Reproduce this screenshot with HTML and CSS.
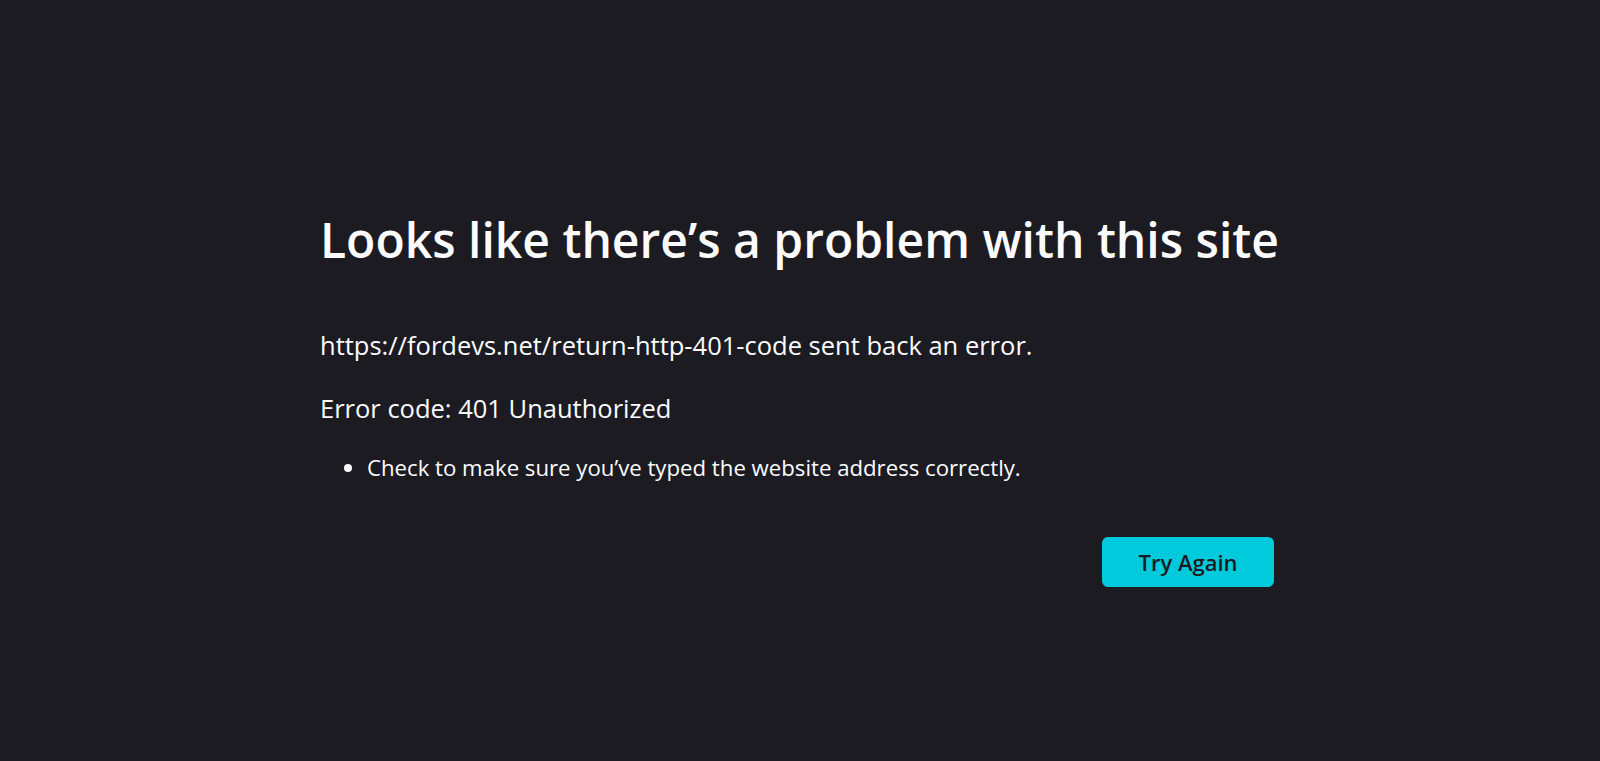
FILE: index.html
```html
<!DOCTYPE html>
<html lang="en">
<head>
<meta charset="utf-8">
<title>Problem loading page</title>
<link rel="stylesheet" href="styles.css">
</head>
<body>
  <main class="container">
    <h1 class="title">Looks like there’s a problem with this site</h1>
    <p class="desc">https://fordevs.net/return-http-401-code sent back an error.</p>
    <p class="code">Error code: 401 Unauthorized</p>
    <ul class="tips">
      <li>Check to make sure you’ve typed the website address correctly.</li>
    </ul>
    <div class="actions">
      <button class="primary" type="button">Try Again</button>
    </div>
  </main>
</body>
</html>
```

FILE: styles.css
```css
html, body {
  margin: 0;
  padding: 0;
}

body {
  background: #1c1b22;
  color: #fbfbfe;
  font-family: "Open Sans", "Noto Sans", sans-serif;
  min-height: 761px;
}

.container {
  width: 960px;
  margin: 0 auto;
  padding-top: 210px;
}

.title {
  margin: 0 0 58px;
  font-size: 48px;
  line-height: 59px;
  font-weight: 600;
  white-space: nowrap;
}

.desc,
.code {
  margin: 0;
  font-size: 25.5px;
  line-height: 36px;
}

.code {
  margin-top: 27px;
}

.tips {
  margin: 25.5px 0 0;
  padding-left: 47px;
  font-size: 22.2px;
  line-height: 32px;
}

.actions {
  display: flex;
  justify-content: flex-end;
  margin-top: 53.5px;
  padding-right: 6px;
}

.primary {
  width: 172px;
  height: 50px;
  border: none;
  border-radius: 6px;
  background: #00cadb;
  color: #1c1b22;
  font-family: inherit;
  font-size: 22px;
  font-weight: 600;
  cursor: pointer;
}
```
